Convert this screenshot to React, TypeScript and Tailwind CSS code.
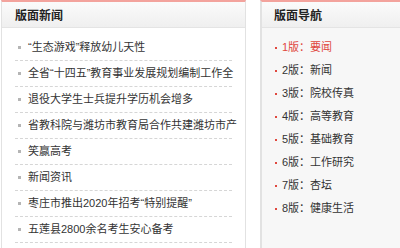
const news = [
  "“生态游戏”释放幼儿天性",
  "全省“十四五”教育事业发展规划编制工作全",
  "退役大学生士兵提升学历机会增多",
  "省教科院与潍坊市教育局合作共建潍坊市产",
  "笑赢高考",
  "新闻资讯",
  "枣庄市推出2020年招考“特别提醒”",
  "五莲县2800余名考生安心备考",
];

const pages = [
  "1版：要闻",
  "2版：新闻",
  "3版：院校传真",
  "4版：高等教育",
  "5版：基础教育",
  "6版：工作研究",
  "7版：杏坛",
  "8版：健康生活",
];

const font = { fontFamily: '"Liberation Sans", "Noto Sans CJK SC", sans-serif' };

export default function App() {
  return (
    <div className="flex h-[248px] w-[400px] gap-[14px] overflow-hidden bg-white" style={font}>
      <div className="ml-[1px] flex w-[245px] shrink-0 flex-col border-x border-t-2 border-x-[#e2e2e2] border-t-[#f3a39d] bg-white">
        <div className="flex h-[26px] items-center border-b border-[#e4e4e4] bg-gradient-to-b from-[#fbfbfb] to-[#efefef] pl-[13px] pt-[2px] text-[12px] font-bold text-[#222]">
          版面新闻
        </div>
        <ul className="px-[13px] pt-[7px]">
          {news.map((t) => (
            <li
              key={t}
              className="flex h-[26px] items-center gap-[7px] whitespace-nowrap border-b border-dashed border-[#d6d6d6] pl-[3px] text-[11px] text-[#333]"
            >
              <span className="h-[3px] w-[3px] shrink-0 bg-[#b5b5b5]" />
              <span>{t}</span>
            </li>
          ))}
        </ul>
      </div>
      <div className="flex flex-1 flex-col border-l-2 border-t-2 border-l-[#e2e2e2] border-t-[#f3a39d] bg-[#f7f7f7]">
        <div className="flex h-[26px] items-center border-b border-[#e4e4e4] bg-gradient-to-b from-[#fbfbfb] to-[#efefef] pl-[12px] pt-[2px] text-[12px] font-bold text-[#222]">
          版面导航
        </div>
        <ul className="pl-[13px] pt-[8px]">
          {pages.map((p, i) => (
            <li
              key={p}
              className={`flex h-[23px] items-center gap-[5px] whitespace-nowrap text-[11px] ${i === 0 ? "text-[#e0483e]" : "text-[#333]"}`}
            >
              <span className="h-[2px] w-[2px] shrink-0 bg-[#e0483e]" />
              {p}
            </li>
          ))}
        </ul>
      </div>
    </div>
  );
}
